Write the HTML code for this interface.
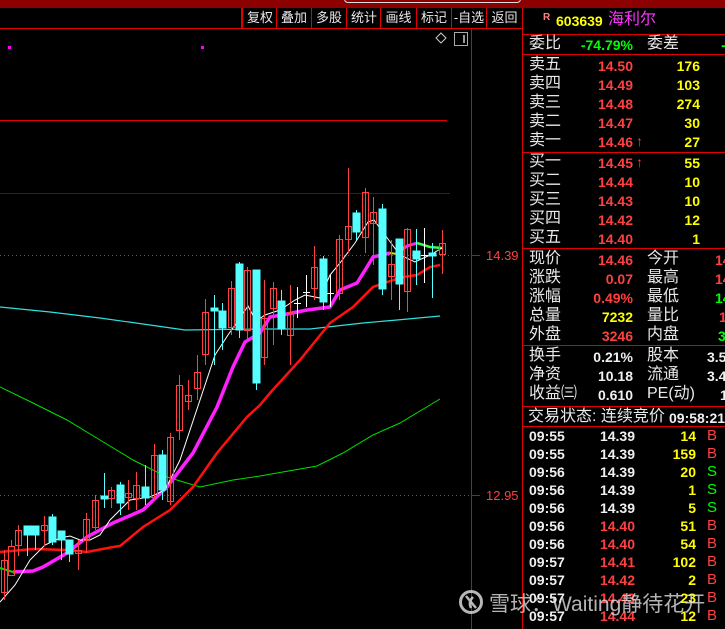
<!DOCTYPE html>
<html><head><meta charset="utf-8"><style>
html,body{margin:0;padding:0;background:#000;width:725px;height:629px;overflow:hidden;position:relative;font-family:"Liberation Sans","Noto Sans CJK SC",sans-serif}
.t{position:absolute;line-height:18px;white-space:nowrap}
.c{font-size:16px;color:#e8e8e8;font-family:"Liberation Sans","Noto Sans CJK SC",sans-serif}
.n{font-size:14px;font-weight:bold}
.r{color:#ff4040}.y{color:#ffff00}.g{color:#00ff00}.w{color:#f0f0f0}.m{color:#ff33ff}
.hl{position:absolute;left:522px;width:203px;height:1px;background:#e00000}
.btn{position:absolute;top:8px;height:20px;line-height:20px;font-size:13px;color:#e8e8e8;text-align:center;border-left:1px solid #e00000}
</style></head><body>
<div style="position:absolute;left:0;top:0;width:725px;height:8px;background:#8c0000"></div>
<div style="position:absolute;left:344px;top:-10px;width:175px;height:11px;border:1px solid #ddd;border-radius:4px"></div>
<div style="position:absolute;left:0;top:28px;width:522px;height:1px;background:#e00000"></div>
<div style="position:absolute;left:241px;top:8px;width:2px;height:20px;background:#e00000"></div>
<div class="btn" style="left:242px;width:34px">复权</div>
<div class="btn" style="left:276px;width:34px">叠加</div>
<div class="btn" style="left:311px;width:34px">多股</div>
<div class="btn" style="left:346px;width:34px">统计</div>
<div class="btn" style="left:380px;width:35px">画线</div>
<div class="btn" style="left:416px;width:34px">标记</div>
<div class="btn" style="left:451px;width:34px">-自选</div>
<div class="btn" style="left:486px;width:35px">返回</div>

<svg style="position:absolute;left:0;top:0" width="725" height="629">
<line x1="522.5" y1="8" x2="522.5" y2="629" stroke="#e00000"/>
<line x1="471.5" y1="28" x2="471.5" y2="629" stroke="#e00000"/>
<line x1="0" y1="120.5" x2="447" y2="120.5" stroke="#e00000"/>
<line x1="0" y1="193.5" x2="450" y2="193.5" stroke="#1010e0"/>
<line x1="0" y1="255.5" x2="471" y2="255.5" stroke="#c03030" stroke-dasharray="1,3"/>
<line x1="0" y1="495.5" x2="471" y2="495.5" stroke="#c03030" stroke-dasharray="1,3"/>
<line x1="471" y1="255.5" x2="480" y2="255.5" stroke="#e00000"/>
<line x1="471" y1="495.5" x2="480" y2="495.5" stroke="#e00000"/>
<text x="486" y="260" font-size="13" fill="#ff4040" font-family="Liberation Sans">14.39</text>
<text x="486" y="500" font-size="13" fill="#ff4040" font-family="Liberation Sans">12.95</text>
<rect x="8" y="46" width="3" height="3" fill="#ff00ff"/>
<rect x="201" y="46" width="3" height="3" fill="#ff00ff"/>
<path d="M441 33 L446 38 L441 43 L436 38 Z" fill="none" stroke="#ccc"/>
<rect x="454.5" y="32.5" width="13" height="13" fill="none" stroke="#aaa"/>
<rect x="463" y="35" width="2" height="8" fill="#999"/>

<!-- MA lines -->
<polyline fill="none" stroke="#00e000" stroke-width="1" points="0,387 33,403 67,420 100,440 133,460 167,477 200,487 233,480 260,476 317,466 343,453 373,435 400,423 440,399"/>
<polyline fill="none" stroke="#30e0e0" stroke-width="1.2" points="0,307 50,312 100,318 150,325 185,330 260,329 310,329 363,323 397,320 440,316"/>
<polyline fill="none" stroke="#ff1010" stroke-width="2.5" points="0,552 33,549 67,550 87,552 113,547 120,546 143,527 170,510 193,487 217,453 247,417 260,405 270,393 300,360 330,323 353,307 373,287 387,282 403,277 417,275 430,267 440,265"/>
<polyline fill="none" stroke="#ff20ff" stroke-width="3.5" points="13,572 33,571 43,567 67,553 87,537 113,523 143,510 167,487 193,453 217,407 233,367 245,342 260,333 270,317 287,314 307,310 330,307 340,290 357,283 367,267 373,257 390,253"/>
<polyline fill="none" stroke="#00e000" stroke-width="2" points="0,568 13,572"/>
<polyline fill="none" stroke="#e0e000" stroke-width="2" points="390,253 397,254 403,249"/>
<polyline fill="none" stroke="#ff20ff" stroke-width="3" points="403,249 407,246 417,243"/>
<polyline fill="none" stroke="#40ff40" stroke-width="2.5" points="417,243 430,247 442,248"/>
<polyline fill="none" stroke="#ffffff" stroke-width="1" points="0,602 15,585 30,560 45,545 60,538 70,536 80,540 90,540 100,535 110,520 130,500 150,497 165,490 180,460 200,400 215,355 228,335 240,318 248,306 256,321 265,315 280,310 295,300 305,295 320,298 330,275 340,263 355,243 368,222 374,220 385,235 400,255 415,262 430,255 442,248"/>

<!-- wicks & candles -->
<g stroke="#ff4040" fill="none" stroke-width="1">
<line x1="4.5" y1="550" x2="4.5" y2="600"/><rect x="1.5" y="560.5" width="6" height="32"/>
<line x1="11.5" y1="540" x2="11.5" y2="546"/><rect x="8.5" y="546.5" width="6" height="29"/>
<line x1="18.5" y1="525" x2="18.5" y2="556"/><rect x="15.5" y="530.5" width="6" height="15"/>
<line x1="44.5" y1="516" x2="44.5" y2="546"/><rect x="41.5" y="525.5" width="6" height="5"/>
<line x1="78.5" y1="540" x2="78.5" y2="570"/><rect x="75.5" y="550.5" width="6" height="3"/>
<line x1="86.5" y1="513" x2="86.5" y2="553"/><rect x="83.5" y="519.5" width="6" height="21"/>
<line x1="95.5" y1="495" x2="95.5" y2="530"/><rect x="92.5" y="500.5" width="6" height="27"/>
<line x1="111.5" y1="487" x2="111.5" y2="508"/><rect x="108.5" y="490.5" width="6" height="8"/>
<line x1="128.5" y1="480" x2="128.5" y2="510"/><rect x="125.5" y="493.5" width="6" height="4"/>
<line x1="136.5" y1="472" x2="136.5" y2="510"/><rect x="133.5" y="485.5" width="6" height="13"/>
<line x1="154.5" y1="444" x2="154.5" y2="500"/><rect x="151.5" y="455.5" width="6" height="42"/>
<line x1="170.5" y1="433" x2="170.5" y2="505"/><rect x="167.5" y="437.5" width="6" height="64"/>
<line x1="179.5" y1="375" x2="179.5" y2="440"/><rect x="176.5" y="385.5" width="6" height="45"/>
<line x1="188.5" y1="380" x2="188.5" y2="410"/><rect x="185.5" y="395.5" width="6" height="6"/>
<line x1="197.5" y1="355" x2="197.5" y2="400"/><rect x="194.5" y="372.5" width="6" height="16"/>
<line x1="205.5" y1="299" x2="205.5" y2="365"/><rect x="202.5" y="312.5" width="6" height="42"/>
<line x1="231.5" y1="281" x2="231.5" y2="335"/><rect x="228.5" y="288.5" width="6" height="39"/>
<line x1="247.5" y1="267" x2="247.5" y2="340"/><rect x="244.5" y="270.5" width="6" height="60"/>
<line x1="264.5" y1="280" x2="264.5" y2="365"/><rect x="261.5" y="318.5" width="6" height="39"/>
<line x1="273.5" y1="282" x2="273.5" y2="345"/><rect x="270.5" y="288.5" width="6" height="20"/>
<line x1="290.5" y1="285" x2="290.5" y2="365"/><rect x="287.5" y="312.5" width="6" height="23"/>
<line x1="314.5" y1="246" x2="314.5" y2="300"/><rect x="311.5" y="267.5" width="6" height="21"/>
<line x1="339.5" y1="235" x2="339.5" y2="300"/><rect x="336.5" y="239.5" width="6" height="54"/>
<line x1="348.5" y1="168" x2="348.5" y2="253"/><rect x="345.5" y="226.5" width="6" height="13"/>
<line x1="365.5" y1="188" x2="365.5" y2="253"/><rect x="362.5" y="192.5" width="6" height="45"/>
<line x1="373.5" y1="197" x2="373.5" y2="265"/><rect x="370.5" y="212.5" width="6" height="11"/>
<line x1="391.5" y1="240" x2="391.5" y2="300"/><rect x="388.5" y="264.5" width="6" height="12"/>
<line x1="407.5" y1="228" x2="407.5" y2="312"/><rect x="404.5" y="229.5" width="6" height="62"/>
<line x1="442.5" y1="230" x2="442.5" y2="274"/><rect x="439.5" y="243.5" width="6" height="11"/>
</g>
<g stroke="#55ffff" fill="#55ffff" stroke-width="1">
<line x1="27.5" y1="526" x2="27.5" y2="556"/><rect x="24" y="526" width="7" height="9"/>
<line x1="35.5" y1="526" x2="35.5" y2="550"/><rect x="32" y="526" width="7" height="9"/>
<line x1="52.5" y1="514" x2="52.5" y2="545"/><rect x="49" y="517" width="7" height="25"/>
<line x1="61.5" y1="531" x2="61.5" y2="560"/><rect x="58" y="531" width="7" height="9"/>
<line x1="69.5" y1="540" x2="69.5" y2="562"/><rect x="66" y="540" width="7" height="14"/>
<line x1="104.5" y1="473" x2="104.5" y2="508"/><rect x="101" y="496" width="7" height="3"/>
<line x1="120.5" y1="482" x2="120.5" y2="515"/><rect x="117" y="485" width="7" height="18"/>
<line x1="145.5" y1="465" x2="145.5" y2="505"/><rect x="142" y="487" width="7" height="11"/>
<line x1="162.5" y1="450" x2="162.5" y2="500"/><rect x="159" y="455" width="7" height="35"/>
<line x1="214.5" y1="295" x2="214.5" y2="365"/><rect x="211" y="308" width="7" height="3"/>
<line x1="222.5" y1="303" x2="222.5" y2="350"/><rect x="219" y="311" width="7" height="17"/>
<line x1="239.5" y1="262" x2="239.5" y2="338"/><rect x="236" y="264" width="7" height="66"/>
<line x1="256.5" y1="270" x2="256.5" y2="390"/><rect x="253" y="270" width="7" height="113"/>
<line x1="281.5" y1="290" x2="281.5" y2="335"/><rect x="278" y="301" width="7" height="28"/>
<line x1="323.5" y1="256" x2="323.5" y2="310"/><rect x="320" y="259" width="7" height="43"/>
<line x1="356.5" y1="210" x2="356.5" y2="240"/><rect x="353" y="213" width="7" height="19"/>
<line x1="382.5" y1="204" x2="382.5" y2="295"/><rect x="379" y="209" width="7" height="80"/>
<line x1="399.5" y1="239" x2="399.5" y2="310"/><rect x="396" y="239" width="7" height="45"/>
<line x1="416.5" y1="229" x2="416.5" y2="285"/><rect x="413" y="251" width="7" height="8"/>
<line x1="432.5" y1="243" x2="432.5" y2="298"/><rect x="429" y="253" width="7" height="3"/>
</g>
<g stroke="#ffffff" stroke-width="1">
<line x1="297.5" y1="287" x2="297.5" y2="318"/><line x1="294" y1="303.5" x2="301" y2="303.5"/>
<line x1="306.5" y1="275" x2="306.5" y2="307"/><line x1="303" y1="292.5" x2="310" y2="292.5"/>
<line x1="330.5" y1="275" x2="330.5" y2="307"/><line x1="327" y1="293.5" x2="334" y2="293.5"/>
<line x1="424.5" y1="228" x2="424.5" y2="283"/><line x1="421" y1="255.5" x2="428" y2="255.5"/>
</g>
</svg>

<!-- right panel -->
<div class="hl" style="top:34px"></div>
<div class="hl" style="top:54px"></div>
<div class="hl" style="top:152px"></div>
<div class="hl" style="top:248px"></div>
<div class="hl" style="top:345px"></div>
<div class="hl" style="top:406px"></div>
<div class="hl" style="top:426px"></div>

<div class="t" style="left:543px;top:9px;font-size:10px;color:#ff8080;font-weight:bold">R</div>
<div class="t n y" style="left:556px;top:12px">603639</div>
<div class="t c m" style="left:608px;top:11px;font-size:16px;color:#ff33ff">海利尔</div>

<div class="t c" style="left:529px;top:35px">委比</div>
<div class="t n g" style="right:92px;top:36px">-74.79%</div>
<div class="t c" style="left:647px;top:35px">委差</div>
<div class="t n g" style="left:721px;top:36px">-</div>

<div class="t c" style="left:529px;top:56px">卖五</div><div class="t n r" style="right:92px;top:57px">14.50</div><div class="t n y" style="right:25px;top:57px">176</div>
<div class="t c" style="left:529px;top:75px">卖四</div><div class="t n r" style="right:92px;top:76px">14.49</div><div class="t n y" style="right:25px;top:76px">103</div>
<div class="t c" style="left:529px;top:94px">卖三</div><div class="t n r" style="right:92px;top:95px">14.48</div><div class="t n y" style="right:25px;top:95px">274</div>
<div class="t c" style="left:529px;top:113px">卖二</div><div class="t n r" style="right:92px;top:114px">14.47</div><div class="t n y" style="right:25px;top:114px">30</div>
<div class="t c" style="left:529px;top:132px">卖一</div><div class="t n r" style="right:92px;top:133px">14.46</div><div class="t n r" style="left:636px;top:132px">↑</div><div class="t n y" style="right:25px;top:133px">27</div>

<div class="t c" style="left:529px;top:153px">买一</div><div class="t n r" style="right:92px;top:154px">14.45</div><div class="t n r" style="left:636px;top:153px">↑</div><div class="t n y" style="right:25px;top:154px">55</div>
<div class="t c" style="left:529px;top:172px">买二</div><div class="t n r" style="right:92px;top:173px">14.44</div><div class="t n y" style="right:25px;top:173px">10</div>
<div class="t c" style="left:529px;top:191px">买三</div><div class="t n r" style="right:92px;top:192px">14.43</div><div class="t n y" style="right:25px;top:192px">10</div>
<div class="t c" style="left:529px;top:210px">买四</div><div class="t n r" style="right:92px;top:211px">14.42</div><div class="t n y" style="right:25px;top:211px">12</div>
<div class="t c" style="left:529px;top:229px">买五</div><div class="t n r" style="right:92px;top:230px">14.40</div><div class="t n y" style="right:25px;top:230px">1</div>

<div class="t c" style="left:529px;top:250px">现价</div><div class="t n r" style="right:92px;top:251px">14.46</div><div class="t c" style="left:647px;top:250px">今开</div><div class="t n r" style="left:715px;top:251px">14</div>
<div class="t c" style="left:529px;top:269px">涨跌</div><div class="t n r" style="right:92px;top:270px">0.07</div><div class="t c" style="left:647px;top:269px">最高</div><div class="t n r" style="left:715px;top:270px">14</div>
<div class="t c" style="left:529px;top:288px">涨幅</div><div class="t n r" style="right:92px;top:289px">0.49%</div><div class="t c" style="left:647px;top:288px">最低</div><div class="t n g" style="left:715px;top:289px">14</div>
<div class="t c" style="left:529px;top:307px">总量</div><div class="t n y" style="right:92px;top:308px">7232</div><div class="t c" style="left:647px;top:307px">量比</div><div class="t n r" style="left:719px;top:308px">1</div>
<div class="t c" style="left:529px;top:326px">外盘</div><div class="t n r" style="right:92px;top:327px">3246</div><div class="t c" style="left:647px;top:326px">内盘</div><div class="t n g" style="left:718px;top:327px">3</div>

<div class="t c" style="left:529px;top:347px">换手</div><div class="t n w" style="right:92px;top:348px">0.21%</div><div class="t c" style="left:647px;top:347px">股本</div><div class="t n w" style="left:707px;top:348px">3.5</div>
<div class="t c" style="left:529px;top:366px">净资</div><div class="t n w" style="right:92px;top:367px">10.18</div><div class="t c" style="left:647px;top:366px">流通</div><div class="t n w" style="left:707px;top:367px">3.4</div>
<div class="t c" style="left:529px;top:385px">收益㈢</div><div class="t n w" style="right:92px;top:386px">0.610</div><div class="t c" style="left:647px;top:385px">PE(动)</div><div class="t n w" style="left:720px;top:386px">1</div>

<div class="t c" style="left:528px;top:408px">交易状态: 连续竞价</div><div class="t n w" style="left:669px;top:409px">09:58:21</div>

<div class="t n w" style="left:529px;top:427px">09:55</div><div class="t n w" style="right:90px;top:427px">14.39</div><div class="t n y" style="right:29px;top:427px">14</div><div class="t n r" style="left:707px;top:427px;font-weight:normal;font-size:15px">B</div>
<div class="t n w" style="left:529px;top:445px">09:55</div><div class="t n w" style="right:90px;top:445px">14.39</div><div class="t n y" style="right:29px;top:445px">159</div><div class="t n r" style="left:707px;top:445px;font-weight:normal;font-size:15px">B</div>
<div class="t n w" style="left:529px;top:463px">09:56</div><div class="t n w" style="right:90px;top:463px">14.39</div><div class="t n y" style="right:29px;top:463px">20</div><div class="t n g" style="left:707px;top:463px;font-weight:normal;font-size:15px">S</div>
<div class="t n w" style="left:529px;top:481px">09:56</div><div class="t n w" style="right:90px;top:481px">14.39</div><div class="t n y" style="right:29px;top:481px">1</div><div class="t n g" style="left:707px;top:481px;font-weight:normal;font-size:15px">S</div>
<div class="t n w" style="left:529px;top:499px">09:56</div><div class="t n w" style="right:90px;top:499px">14.39</div><div class="t n y" style="right:29px;top:499px">5</div><div class="t n g" style="left:707px;top:499px;font-weight:normal;font-size:15px">S</div>
<div class="t n w" style="left:529px;top:517px">09:56</div><div class="t n r" style="right:90px;top:517px">14.40</div><div class="t n y" style="right:29px;top:517px">51</div><div class="t n r" style="left:707px;top:517px;font-weight:normal;font-size:15px">B</div>
<div class="t n w" style="left:529px;top:535px">09:56</div><div class="t n r" style="right:90px;top:535px">14.40</div><div class="t n y" style="right:29px;top:535px">54</div><div class="t n r" style="left:707px;top:535px;font-weight:normal;font-size:15px">B</div>
<div class="t n w" style="left:529px;top:553px">09:57</div><div class="t n r" style="right:90px;top:553px">14.41</div><div class="t n y" style="right:29px;top:553px">102</div><div class="t n r" style="left:707px;top:553px;font-weight:normal;font-size:15px">B</div>
<div class="t n w" style="left:529px;top:571px">09:57</div><div class="t n r" style="right:90px;top:571px">14.42</div><div class="t n y" style="right:29px;top:571px">2</div><div class="t n r" style="left:707px;top:571px;font-weight:normal;font-size:15px">B</div>
<div class="t n w" style="left:529px;top:589px">09:57</div><div class="t n r" style="right:90px;top:589px">14.43</div><div class="t n y" style="right:29px;top:589px">23</div><div class="t n r" style="left:707px;top:589px;font-weight:normal;font-size:15px">B</div>
<div class="t n w" style="left:529px;top:607px">09:57</div><div class="t n r" style="right:90px;top:607px">14.44</div><div class="t n y" style="right:29px;top:607px">12</div><div class="t n r" style="left:707px;top:607px;font-weight:normal;font-size:15px">B</div>

<!-- watermark -->
<svg style="position:absolute;left:458px;top:589px" width="26" height="26">
<circle cx="13" cy="13" r="10.5" fill="none" stroke="rgba(215,215,215,0.85)" stroke-width="3"/>
<path d="M8 7 L18 19 M15 8 Q10 13 13 19" fill="none" stroke="rgba(215,215,215,0.85)" stroke-width="2.5"/>
</svg>
<div class="t" style="left:489px;top:592px;font-size:21px;line-height:26px;color:rgba(225,225,225,0.8);font-family:'Liberation Sans','Noto Sans CJK SC',sans-serif">雪球：Waiting静待花开</div>
</body></html>
